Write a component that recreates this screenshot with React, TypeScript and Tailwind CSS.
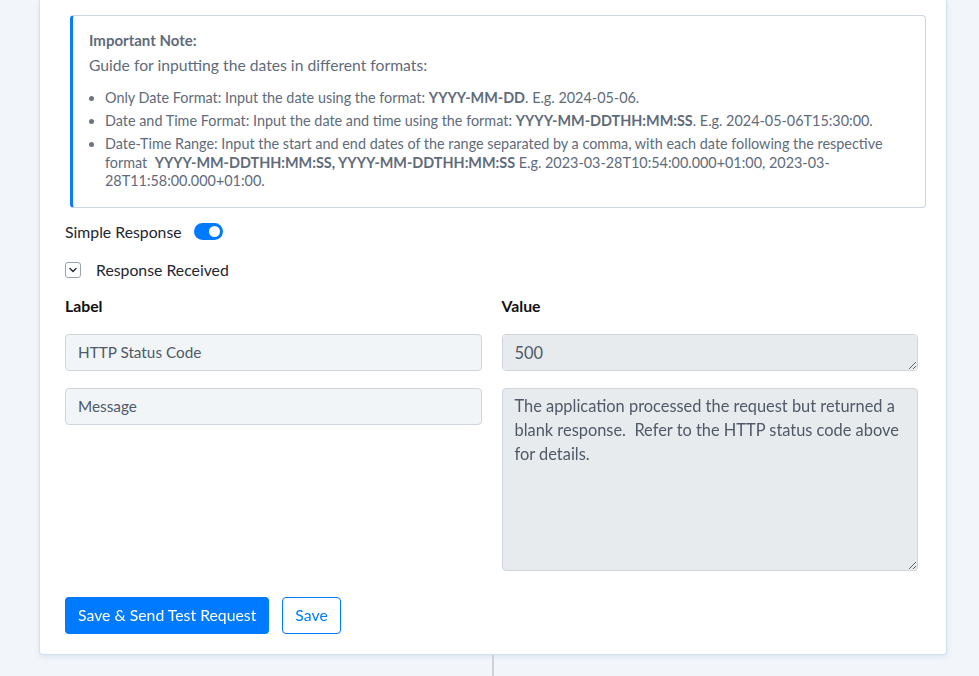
import React from "react";

const font = { fontFamily: "Lato, 'Open Sans', sans-serif" };

function Toggle() {
  return (
    <span className="inline-flex h-[17px] w-[29px] items-center justify-end rounded-full bg-[#007bff] px-[3px]">
      <span className="h-[11px] w-[11px] rounded-full bg-white" />
    </span>
  );
}

function ChevronBox() {
  return (
    <span className="inline-flex h-[16px] w-[16px] items-center justify-center rounded-[3px] border border-[#9aa3ad] bg-white">
      <svg width="8" height="6" viewBox="0 0 8 6" fill="none">
        <path d="M1 1.5 L4 4.5 L7 1.5" stroke="#2d3440" strokeWidth="1.5" strokeLinecap="round" strokeLinejoin="round" />
      </svg>
    </span>
  );
}

export default function App() {
  return (
    <div className="h-[676px] overflow-hidden bg-[#f2f5f9]" style={font}>
      <div className="ml-[39px] w-[908px] rounded-b-[4px] border border-t-0 border-[#d4e0f4] bg-white pb-[20px] shadow-[0_2px_4px_rgba(180,200,230,0.35)]">
        <div className="ml-[30px] mr-[20px] pt-[15px]">
          <div className="rounded-[4px] border border-l-[3px] border-[#cdd5df] border-l-[#0a7cff] pb-[16px] pl-[16px] pr-[18px] pt-[15px] text-[#5f6b7a]">
            <div className="text-[15px] font-bold leading-[19px]">Important Note:</div>
            <div className="mt-[5px] text-[15.7px] leading-[20px]">Guide for inputting the dates in different formats:</div>
            <ul className="mt-[14px] list-disc pl-[16px] text-[14.4px] leading-[18.5px] marker:text-[#6b7480]">
              <li className="mb-[4.5px]">
                Only Date Format: Input the date using the format: <b>YYYY-MM-DD</b>. E.g. 2024-05-06.
              </li>
              <li className="mb-[4.5px]">
                Date and Time Format: Input the date and time using the format: <b>YYYY-MM-DDTHH:MM:SS</b>. E.g. 2024-05-06T15:30:00.
              </li>
              <li>
                Date-Time Range: Input the start and end dates of the range separated by a comma, with each date following the respective format&nbsp; <b>YYYY-MM-DDTHH:MM:SS, YYYY-MM-DDTHH:MM:SS</b> E.g. 2023-03-28T10:54:00.000+01:00, 2023-03-28T11:58:00.000+01:00.
              </li>
            </ul>
          </div>
        </div>

        <div className="pl-[25px] pr-[28px]">
          <div className="mt-[14px] flex items-center gap-[12px] text-[15.8px] leading-[20px] text-[#1f2630]">
            <span>Simple Response</span>
            <Toggle />
          </div>

          <div className="mt-[18px] flex items-center gap-[15px] text-[15.8px] leading-[20px] text-[#1f2630]">
            <ChevronBox />
            <span>Response Received</span>
          </div>

          <div className="mt-[16px] grid grid-cols-2 gap-x-[20px]">
            <div className="text-[15.8px] font-bold leading-[20px] text-[#111]">Label</div>
            <div className="text-[15.8px] font-bold leading-[20px] text-[#111]">Value</div>

            <div className="mt-[18px] flex h-[37px] items-center rounded-[4px] border border-[#cfd5dc] bg-[#f2f5f8] px-[12px] text-[15.3px] text-[#4f5967]">
              HTTP Status Code
            </div>
            <textarea
              readOnly
              value="500"
              className="mt-[18px] block h-[37px] resize-y rounded-[4px] border border-[#cfd5dc] bg-[#e8ebee] px-[12px] py-[6px] text-[16.4px] leading-[24px] text-[#4f5967] outline-none"
            />

            <div className="mt-[17px] flex h-[37px] items-center self-start rounded-[4px] border border-[#cfd5dc] bg-[#f2f5f8] px-[12px] text-[15.3px] text-[#4f5967]">
              Message
            </div>
            <textarea
              readOnly
              value="The application processed the request but returned a blank response.  Refer to the HTTP status code above for details."
              className="mt-[17px] block h-[183px] resize-y rounded-[4px] border border-[#cfd5dc] bg-[#e8ebee] px-[12px] py-[5px] text-[16.4px] leading-[24px] text-[#4f5967] outline-none"
            />
          </div>

          <div className="mt-[26px] flex items-center gap-[13px] text-[15.8px]">
            <button className="h-[37px] rounded-[4px] bg-[#007bff] px-[13px] text-white">Save &amp; Send Test Request</button>
            <button className="h-[37px] rounded-[4px] border border-[#007bff] bg-white px-[12px] text-[#007bff]">Save</button>
          </div>
        </div>
      </div>
      <div className="ml-[492px] h-[40px] w-[2px] bg-[#cfd3d9]" />
    </div>
  );
}
